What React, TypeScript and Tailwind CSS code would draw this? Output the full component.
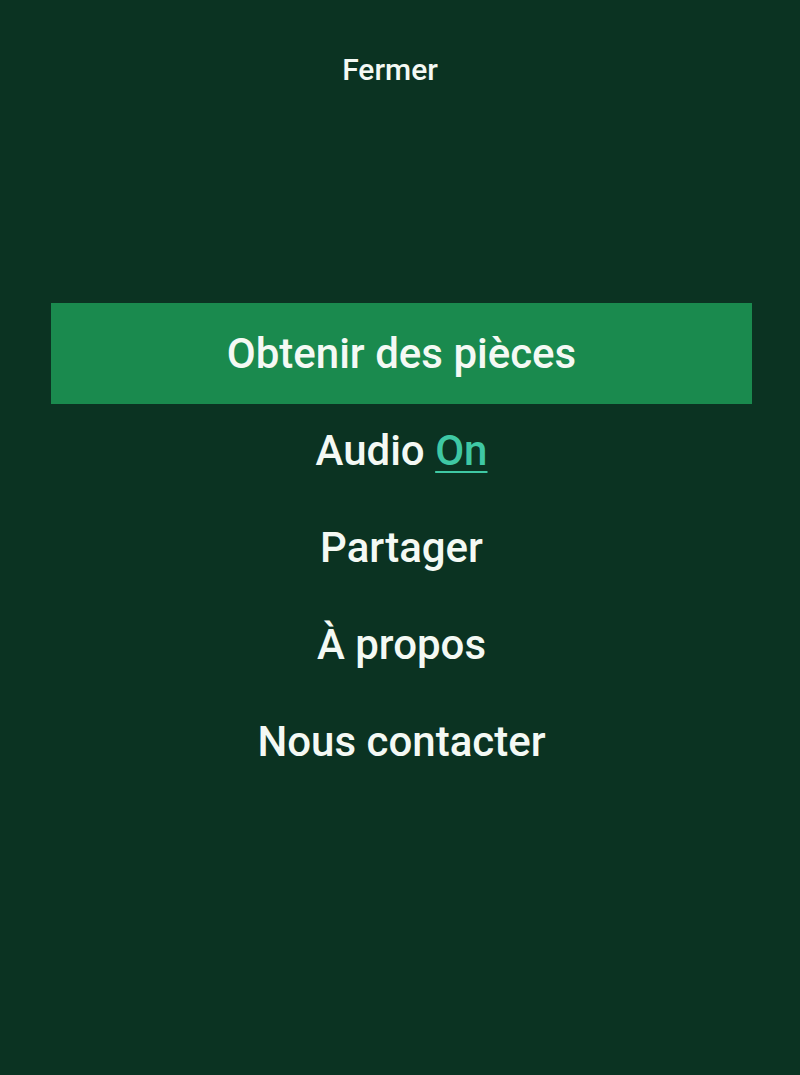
import { useState } from "react";

const items = ["Obtenir des pièces", "Audio", "Partager", "À propos", "Nous contacter"];

export default function App() {
  const [audioOn, setAudioOn] = useState(true);

  return (
    <div
      className="h-[1075px] w-full bg-[#0b3322] text-[#f4f9f4] flex flex-col"
      style={{ fontFamily: "Roboto, 'Noto Sans', sans-serif" }}
    >
      {/* Close link */}
      <div className="h-[140px] flex items-center justify-center pr-[20px]">
        <button className="text-[30px] font-medium leading-none">Fermer</button>
      </div>

      <nav className="mt-[165px] flex flex-col pl-[3px]">
        {items.map((label, i) =>
          i === 0 ? (
            <div key={label} className="mx-[48px] -my-[2px] h-[101px] bg-[#1a8a4e] flex items-center justify-center">
              <span className="text-[42px] font-medium leading-none">{label}</span>
            </div>
          ) : (
            <div key={label} className="h-[97px] flex items-center justify-center">
              <span className="text-[42px] font-medium leading-none">
                {label}
                {label === "Audio" && (
                  <>
                    {" "}
                    <button
                      className="text-[#3fc8a4] underline underline-offset-[6px] decoration-2"
                      onClick={() => setAudioOn(!audioOn)}
                    >
                      {audioOn ? "On" : "Off"}
                    </button>
                  </>
                )}
              </span>
            </div>
          )
        )}
      </nav>
    </div>
  );
}
